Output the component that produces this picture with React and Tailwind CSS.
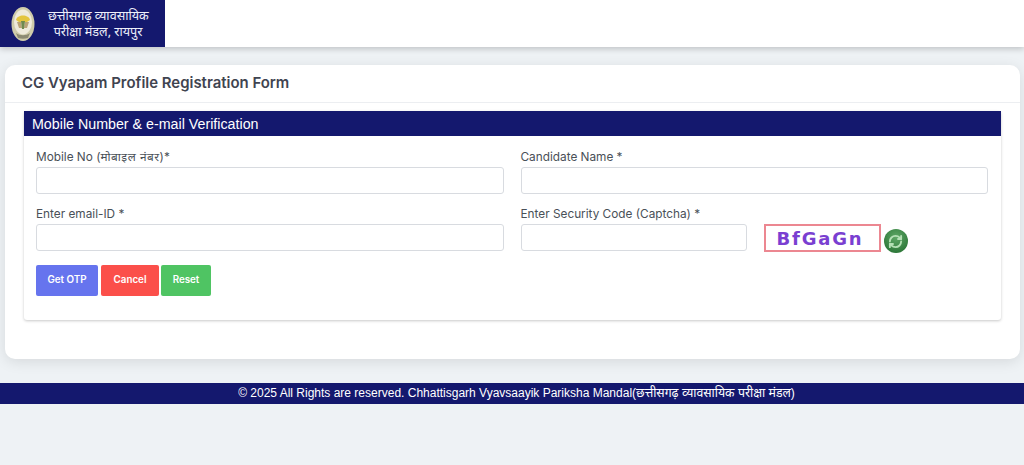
import { RefreshCw } from 'lucide-react';

function Field({ label, className = '' }) {
  return (
    <div className={className}>
      <label className="block text-[11.8px] leading-[16px] h-[16px] text-[#495057] mb-[2px]">{label}</label>
      <input className="block w-full h-[27px] bg-white border border-[#d8dbe0] rounded-[3px]" />
    </div>
  );
}

function Logo() {
  return (
    <svg width="24" height="36" viewBox="0 0 24 36">
      <ellipse cx="12" cy="18" rx="11.5" ry="17" fill="#cfcbaa" />
      <ellipse cx="12" cy="16" rx="9" ry="12.5" fill="#eeeadb" />
      <path d="M5 14c1-6 13-6 14 0l-3 2H8z" fill="#e3c53f" />
      <path d="M6 16h4l1 6H8zM18 16h-4l-1 6h3z" fill="#b9a377" />
      <path d="M10 15h4l-1 8h-2z" fill="#6f8a4e" />
      <path d="M5 27c4 3 10 3 14 0l-2 5c-3 1-7 1-10 0z" fill="#8c8a72" />
    </svg>
  );
}

export default function App() {
  return (
    <div className="min-h-[465px] bg-[#eef2f5] font-['Inter','Noto_Sans','DejaVu_Sans',sans-serif]">
      <header className="h-[47px] bg-white shadow-[0_2px_6px_rgba(0,0,0,0.2)]">
        <div className="flex items-center w-[165px] h-full bg-[#14186e] pl-[11px] gap-[13px]">
          <Logo />
          <div className="w-[100px] text-[#eef0fa] text-[12.6px] leading-[16px] text-center whitespace-nowrap font-['Noto_Sans','DejaVu_Sans',sans-serif]">
            <div>छत्तीसगढ़ व्यावसायिक</div>
            <div>परीक्षा मंडल, रायपुर</div>
          </div>
        </div>
      </header>

      <main className="ml-[5px] mr-[4px] mt-[18px] h-[294px] bg-white rounded-[10px] shadow-[0_3px_14px_rgba(0,0,0,0.1)]">
        <div className="h-[38px] flex items-center pl-[17px] border-b border-[#eceef1]">
          <h1 className="text-[14.93px] font-semibold text-[#3f4450]">CG Vyapam Profile Registration Form</h1>
        </div>

        <section className="mt-[8px] ml-[19px] mr-[19px] h-[209px] rounded-[3px] shadow-[0_1px_3px_rgba(0,0,0,0.22)]">
          <h2 className="h-[25px] bg-[#14186e] text-white text-[14.25px] leading-[26px] pl-[8px] font-['Liberation_Sans',sans-serif]">
            Mobile Number &amp; e-mail Verification
          </h2>
          <div className="pt-[13px] px-[12px]">
            <div className="grid grid-cols-2 gap-x-[17px] gap-y-[12px] pr-[1px]">
              <Field label={<>Mobile No (<span className="tracking-[0.5px]">मोबाइल नंबर</span>)*</>} />
              <Field label="Candidate Name *" />
              <Field label="Enter email-ID *" />
              <div className="flex items-end">
                <Field label="Enter Security Code (Captcha) *" className="w-[226px]" />
                <div className="ml-[17px] w-[117px] h-[28px] mb-[-1px] pt-[2px] pr-[4px] border-2 border-[#ec8791] flex items-center justify-center text-[#7a3fd1] text-[18px] leading-[20px] font-bold tracking-[1.8px] font-['DejaVu_Sans',sans-serif]">
                  BfGaGn
                </div>
                <div className="ml-[3px] mb-[-2px] w-[24px] h-[24px] rounded-full bg-[radial-gradient(circle_at_50%_35%,#5fa866,#1f6a2c)] flex items-center justify-center">
                  <RefreshCw size={15} strokeWidth={3} color="#b5e0b5" />
                </div>
              </div>
            </div>
            <div className="flex mt-[14px] gap-[3px] text-white text-[9.8px] font-semibold">
              <button className="w-[62px] h-[31px] bg-[#6674ee] rounded-[2px]">Get OTP</button>
              <button className="w-[58px] h-[31px] bg-[#fb4f4a] rounded-[2px]">Cancel</button>
              <button className="w-[50px] h-[31px] ml-[-1px] bg-[#4fc463] rounded-[2px]">Reset</button>
            </div>
          </div>
        </section>
      </main>

      <footer className="mt-[24px] h-[21px] pl-[9px] bg-[#14186e] text-white text-[12px] leading-[21px] text-center font-['Liberation_Sans','Noto_Sans',sans-serif]">
        © 2025 All Rights are reserved. Chhattisgarh Vyavsaayik Pariksha Mandal(<span className="text-[12.3px] leading-[16px]">छत्तीसगढ़ व्यावसायिक परीक्षा मंडल</span>)
      </footer>
    </div>
  );
}
